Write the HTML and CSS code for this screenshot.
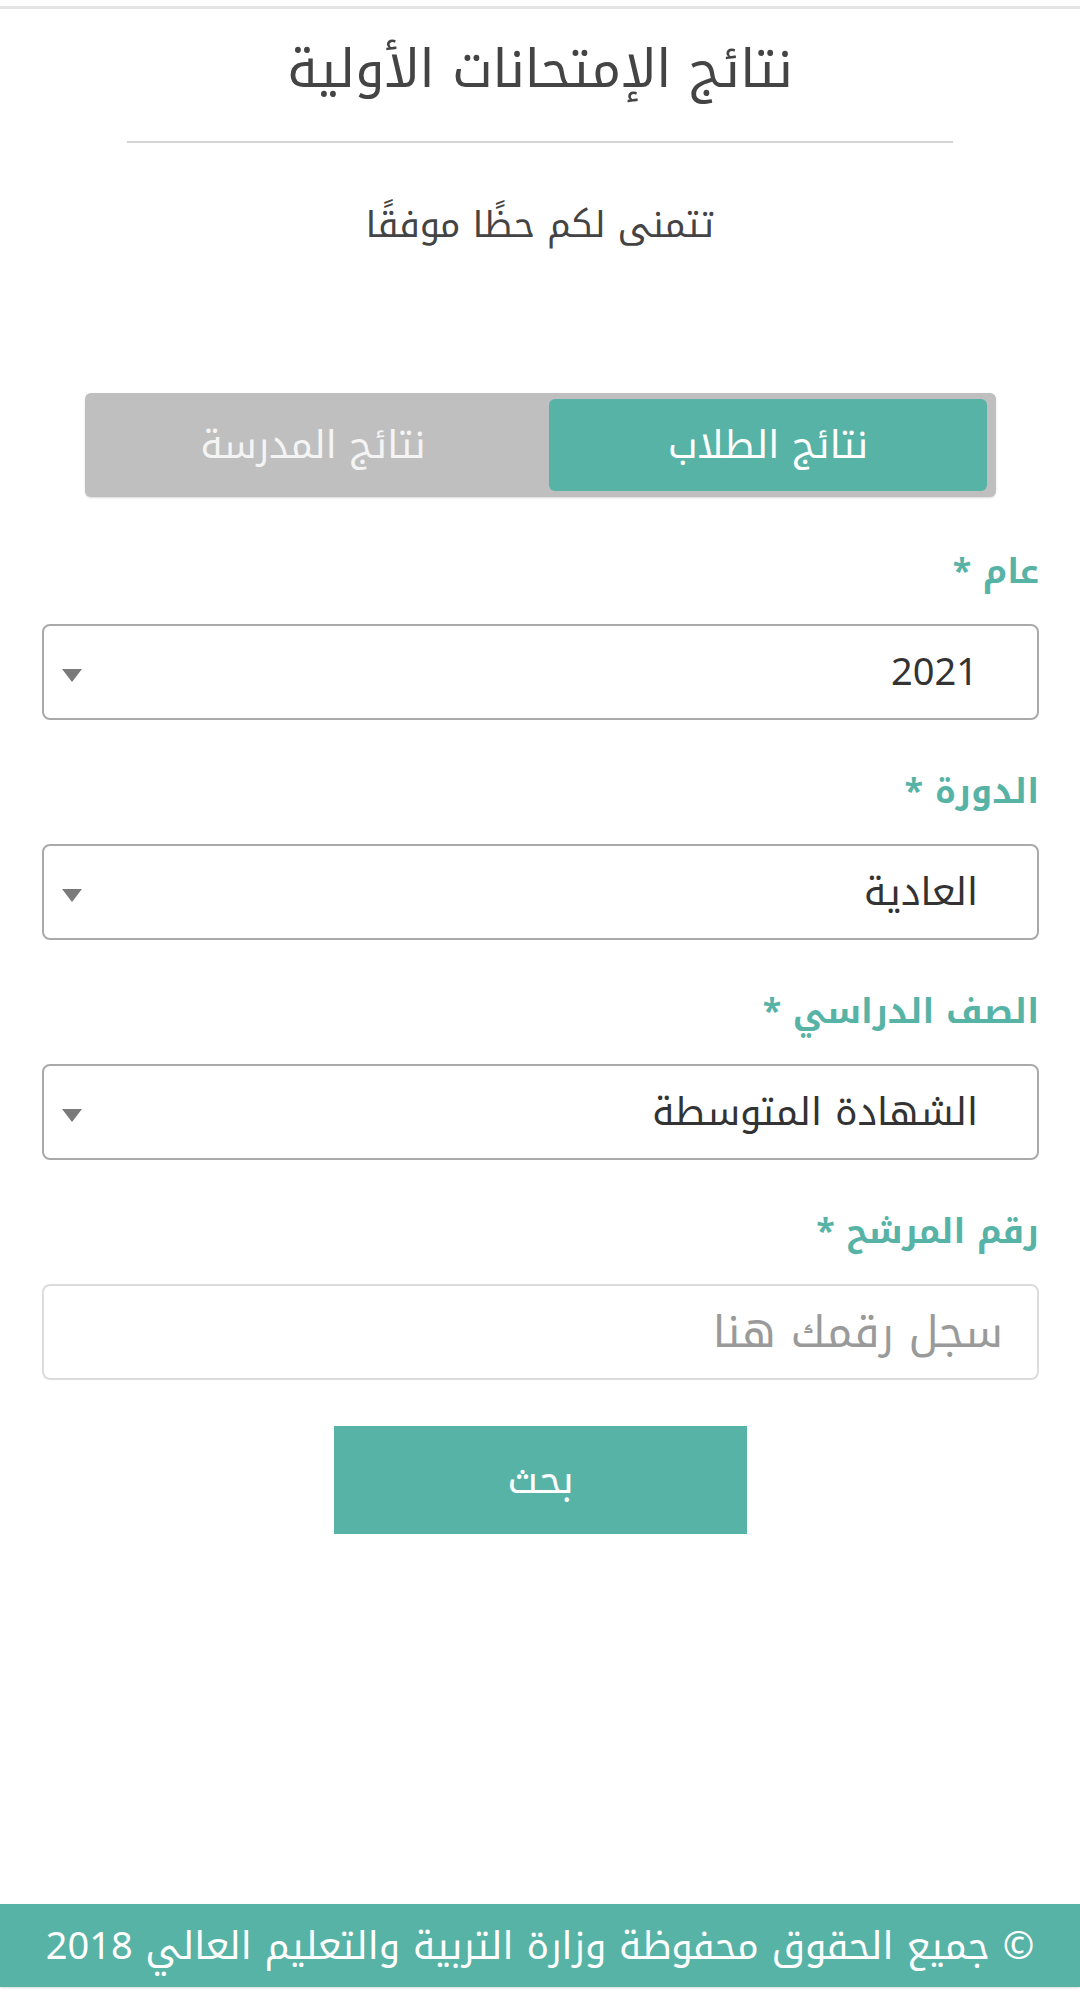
FILE: index.html
```html
<!DOCTYPE html>
<html lang="ar" dir="rtl">
<head>
<meta charset="utf-8">
<title>نتائج الإمتحانات الأولية</title>
<link rel="stylesheet" href="styles.css">
</head>
<body>
<div class="page">
  <div class="topline"></div>
  <main class="main">
    <h1 class="title">نتائج الإمتحانات الأولية</h1>
    <hr class="rule">
    <p class="subtitle">تتمنى لكم حظًا موفقًا</p>

    <div class="tabs">
      <div class="tab tab-active">نتائج الطلاب</div>
      <div class="tab tab-idle">نتائج المدرسة</div>
    </div>

    <form class="form">
      <div class="field">
        <label class="label">عام *</label>
        <div class="select">
          <span class="select-text">2021</span>
          <svg class="caret" width="20" height="13" viewBox="0 0 20 13"><polygon points="0,0 20,0 10,13" fill="#7a7a7a"/></svg>
        </div>
      </div>
      <div class="field">
        <label class="label">الدورة *</label>
        <div class="select">
          <span class="select-text">العادية</span>
          <svg class="caret" width="20" height="13" viewBox="0 0 20 13"><polygon points="0,0 20,0 10,13" fill="#7a7a7a"/></svg>
        </div>
      </div>
      <div class="field">
        <label class="label">الصف الدراسي *</label>
        <div class="select">
          <span class="select-text">الشهادة المتوسطة</span>
          <svg class="caret" width="20" height="13" viewBox="0 0 20 13"><polygon points="0,0 20,0 10,13" fill="#7a7a7a"/></svg>
        </div>
      </div>
      <div class="field field-last">
        <label class="label">رقم المرشح *</label>
        <input class="input" type="text" placeholder="سجل رقمك هنا">
      </div>
      <div class="actions">
        <button type="button" class="btn">بحث</button>
      </div>
    </form>
  </main>
  <footer class="footer">© جميع الحقوق محفوظة وزارة التربية والتعليم العالي 2018</footer>
</div>
</body>
</html>
```

FILE: styles.css
```css
* { box-sizing: border-box; }
html, body { margin: 0; padding: 0; background: #fff; }
body {
  font-family: "Noto Kufi Arabic", "Noto Sans Arabic", "DejaVu Sans", "Noto Sans", sans-serif;
  color: #444;
}
.page {
  min-height: 1994px;
  display: flex;
  flex-direction: column;
}
.topline {
  margin-top: 6px;
  height: 3px;
  background: #e4e4e4;
}
.main { flex: 1; }
.title {
  margin: 0;
  padding-top: 30px;
  font-size: 52px;
  line-height: 62px;
  font-weight: 400;
  text-align: center;
  color: #444;
}
.rule {
  margin: 40px 127px 0;
  border: 0;
  height: 2px;
  background: #d4d4d4;
}
.subtitle {
  margin: 60px 0 0;
  font-size: 36px;
  line-height: 44px;
  text-align: center;
  color: #444;
}
.tabs {
  margin: 146px 84px 0 85px;
  height: 104px;
  padding: 6px 9px 6px 9px;
  background: #bfbfbf;
  border-radius: 6px;
  box-shadow: 0 1px 2px rgba(0,0,0,0.15);
  display: grid;
  grid-template-columns: 438px 1fr;
}
.tab {
  display: flex;
  align-items: center;
  justify-content: center;
  font-size: 38px;
  color: #f4f4f4;
  border-radius: 6px;
}
.tab-idle { margin-right: 17px; }
.tab-active {
  background: #57b3a5;
  color: #fff;
}
.form {
  margin: 50px 41px 0 42px;
  display: flex;
  flex-direction: column;
}
.field {
  display: flex;
  flex-direction: column;
  margin-bottom: 47px;
}
.field-last { margin-bottom: 46px; }
.label {
  font-size: 34px;
  line-height: 50px;
  font-weight: 700;
  color: #57b3a5;
  margin-bottom: 27px;
}
.select {
  height: 96px;
  border: 2px solid #a9a9a9;
  border-radius: 8px;
  display: flex;
  align-items: center;
  justify-content: space-between;
  padding: 0 59px 0 18px;
}
.select-text {
  font-size: 38px;
  color: #333;
}
.caret { display: block; margin-top: 6px; }
.input {
  height: 96px;
  border: 2px solid #dcdcdc;
  border-radius: 8px;
  padding: 0 34px;
  font-family: inherit;
  font-size: 44px;
  color: #333;
  direction: rtl;
  outline: none;
}
.input::placeholder { color: #9a9a9a; }
.actions {
  display: flex;
  justify-content: center;
}
.btn {
  width: 413px;
  height: 108px;
  border: 0;
  border-radius: 0;
  background: #57b3a5;
  color: #fff;
  font-family: inherit;
  font-size: 39px;
}
.footer {
  height: 83px;
  margin-bottom: 7px;
  background: #57b3a5;
  color: #fff;
  font-size: 38px;
  display: flex;
  align-items: center;
  justify-content: center;
  box-shadow: 0 1px 2px rgba(0,0,0,0.15);
}
```
